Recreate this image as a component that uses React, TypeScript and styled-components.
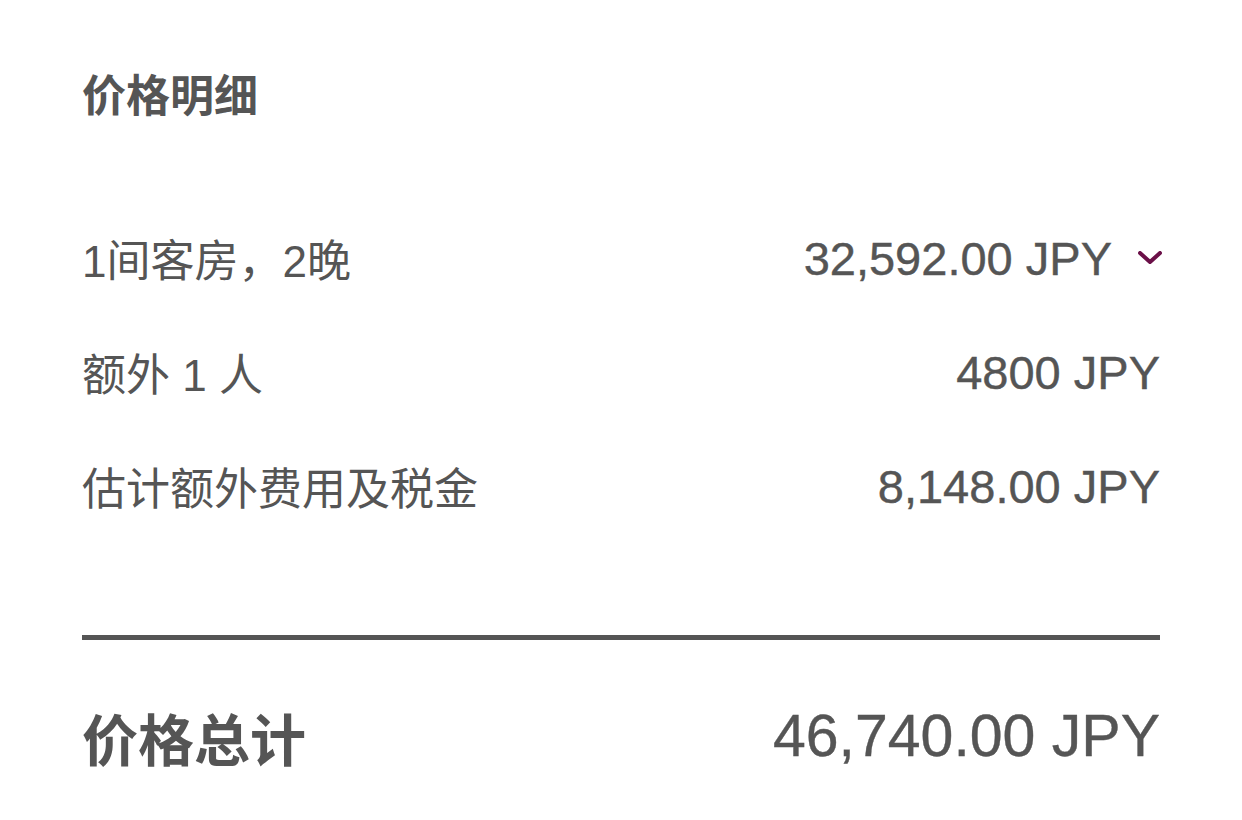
import React from 'react';
import styled, { createGlobalStyle } from 'styled-components';

const GlobalStyle = createGlobalStyle`
  body {
    margin: 0;
    background: #ffffff;
    font-family: "Liberation Sans", "Noto Sans CJK SC", sans-serif;
    color: #555555;
  }
`;

const Container = styled.div`
  width: 1078px;
  padding: 65px 0 0 82px;
`;

const Title = styled.div`
  height: 64px;
  line-height: 64px;
  font-size: 44px;
  font-weight: bold;
`;

const List = styled.div`
  margin-top: 72px;
`;

const Row = styled.div<{ $height: number }>`
  height: ${(p) => p.$height}px;
  display: flex;
  align-items: center;
  justify-content: space-between;
`;

const Label = styled.div<{ $size: number; $bold?: boolean }>`
  font-size: ${(p) => p.$size}px;
  font-weight: ${(p) => (p.$bold ? 'bold' : 'normal')};
`;

const Amount = styled.div<{ $size: number }>`
  display: flex;
  align-items: center;
  font-size: ${(p) => p.$size}px;
  -webkit-text-stroke: 0.4px #555555;
`;

const Toggle = styled.button`
  display: flex;
  align-items: center;
  border: none;
  background: none;
  padding: 0;
  margin: 0 -2px 0 26px;
  cursor: pointer;
`;

const Divider = styled.hr`
  margin: 92px 0 0;
  border: none;
  height: 5px;
  background: #555555;
`;

const TotalRow = styled(Row)`
  margin-top: 56px;
`;

const Chevron = () => (
  <svg width="24" height="14" viewBox="0 0 24 14">
    <path d="M2 2 L12 11 L22 2" fill="none" stroke="#6b1048" strokeWidth="4" strokeLinecap="round" strokeLinejoin="round" />
  </svg>
);

const items = [
  { label: '额外 1 人', amount: '4800 JPY' },
  { label: '估计额外费用及税金', amount: '8,148.00 JPY' }
];

const App = () => (
  <Container>
    <GlobalStyle />
    <Title>价格明细</Title>
    <List>
      <Row $height={114}>
        <Label $size={44}>1间客房，2晚</Label>
        <Amount $size={47}>
          32,592.00 JPY
          <Toggle aria-label="展开">
            <Chevron />
          </Toggle>
        </Amount>
      </Row>
      {items.map((item) => (
        <Row $height={114} key={item.label}>
          <Label $size={44}>{item.label}</Label>
          <Amount $size={47}>{item.amount}</Amount>
        </Row>
      ))}
    </List>
    <Divider />
    <TotalRow $height={80}>
      <Label $size={56} $bold>
        价格总计
      </Label>
      <Amount $size={59}>46,740.00 JPY</Amount>
    </TotalRow>
  </Container>
);

export default App;
